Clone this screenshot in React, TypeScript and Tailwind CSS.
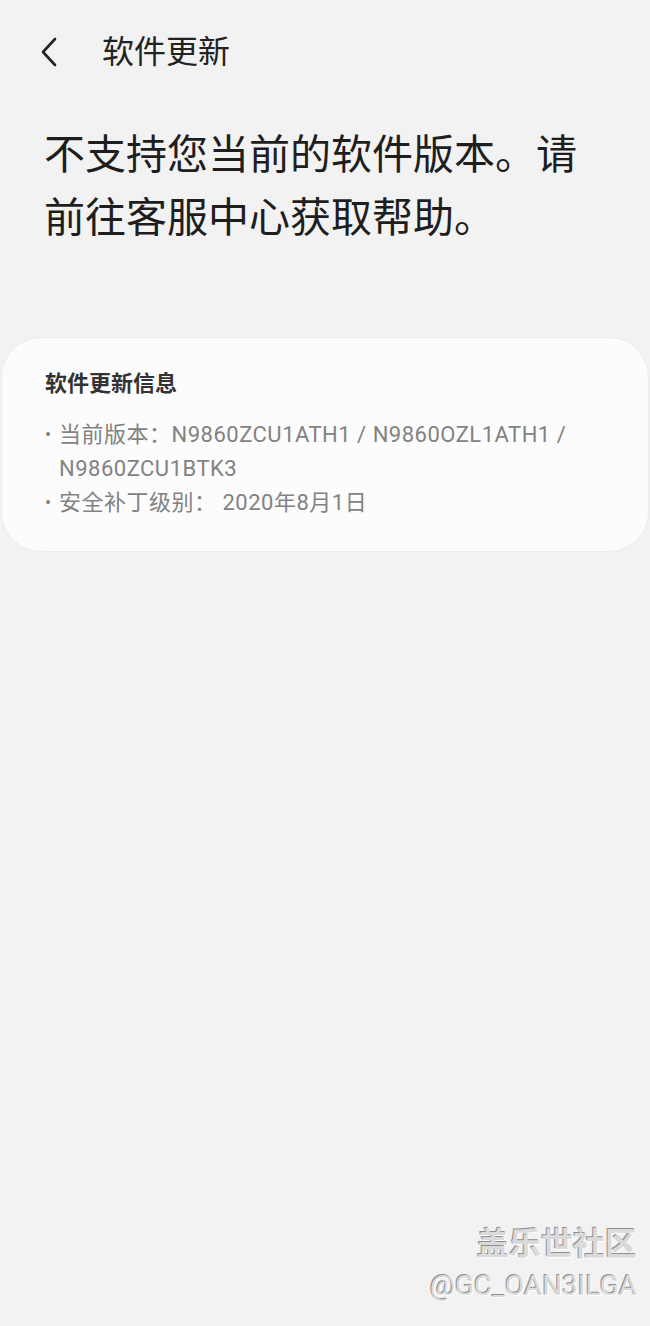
import React from "react";

const font = { fontFamily: '"Roboto", "Noto Sans CJK SC", sans-serif' };

function BackIcon() {
  return (
    <svg width="20" height="30" viewBox="0 0 20 30" fill="none">
      <polyline
        points="16,2 4,15 16,28"
        stroke="#222"
        strokeWidth="2.6"
        strokeLinecap="round"
        strokeLinejoin="round"
      />
    </svg>
  );
}

export default function App() {
  return (
    <div
      className="flex flex-col w-[650px] h-[1326px] bg-[#f2f2f2] overflow-hidden"
      style={font}
    >
      {/* header */}
      <div className="flex items-center h-[104px] pl-[39px]">
        <BackIcon />
        <span className="ml-[43px] text-[32px] text-[#222] leading-none">
          软件更新
        </span>
      </div>

      {/* message */}
      <div className="px-[44px] pt-[20px] text-[41px] leading-[63px] text-[#1e1e1e]">
        不支持您当前的软件版本。请前往客服中心获取帮助。
      </div>

      {/* card */}
      <div className="mt-[87px] mx-[1px] rounded-[40px] bg-[#fcfcfc] border border-[#ececec] pl-[43px] pr-[30px] pt-[30px] pb-[31px]">
        <div className="text-[22px] font-bold text-[#333] leading-[32px]">
          软件更新信息
        </div>
        <ul className="mt-[18px] text-[22px] text-[#828282] leading-[34px] tracking-[0.5px]">
          <li className="flex">
            <span className="w-[14px] shrink-0 text-[18px]">•</span>
            <span>当前版本：N9860ZCU1ATH1 / N9860OZL1ATH1 / N9860ZCU1BTK3</span>
          </li>
          <li className="flex">
            <span className="w-[14px] shrink-0 text-[18px]">•</span>
            <span>安全补丁级别： 2020年8月1日</span>
          </li>
        </ul>
      </div>

      <div className="flex-1" />

      {/* watermark */}
      <div className="flex flex-col items-end pr-[13px] pb-[20px] text-[#dadada] [text-shadow:-1px_-1px_0_#8f8f8f,1px_1px_0_#ffffff]">
        <div className="text-[32px] font-bold leading-[44px]">盖乐世社区</div>
        <div className="text-[28px] leading-[40px]">@GC_OAN3ILGA</div>
      </div>
    </div>
  );
}
